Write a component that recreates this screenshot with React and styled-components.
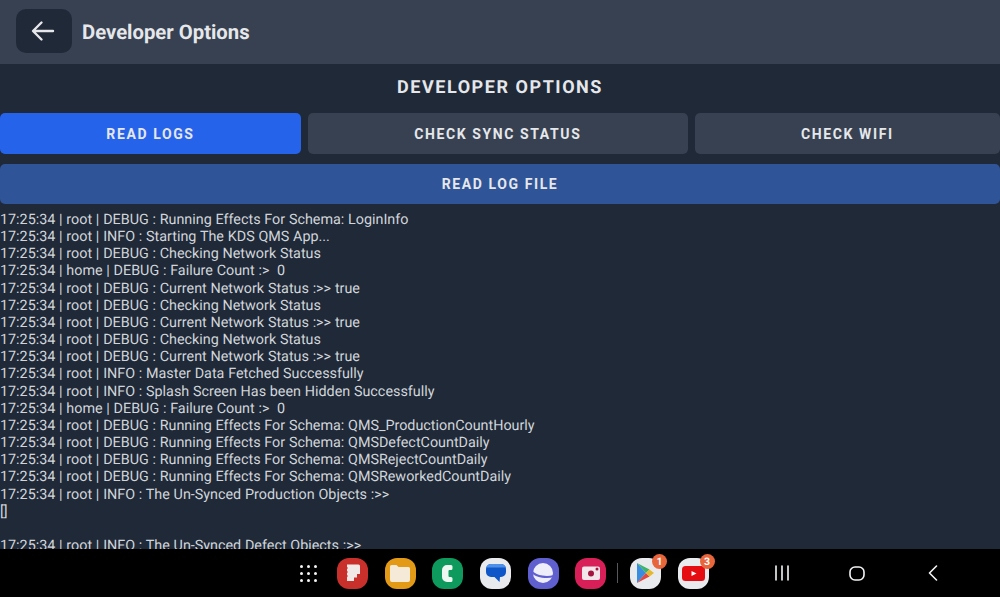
import styled, { createGlobalStyle } from 'styled-components';

const GlobalStyle = createGlobalStyle`
  html, body {
    margin: 0;
    padding: 0;
    background: #000;
    font-family: Roboto, "Liberation Sans", sans-serif;
    text-rendering: geometricPrecision;
  }
`;

const Page = styled.div`
  width: 1000px;
  height: 597px;
  display: flex;
  flex-direction: column;
  overflow: hidden;
  background: #1f2937;
`;

const Header = styled.header`
  height: 64px;
  flex: none;
  display: flex;
  align-items: center;
  gap: 10px;
  padding: 0 0 0 16px;
  box-sizing: border-box;
  background: #374151;
`;

const BackButton = styled.button`
  width: 56px;
  height: 44px;
  margin-top: -2px;
  border: none;
  border-radius: 10px;
  background: #1f2937;
  display: flex;
  align-items: center;
  justify-content: center;
  padding: 0 2px 0 0;
`;

const HeaderTitle = styled.h1`
  margin: 0;
  font-size: 20.3px;
  font-weight: 700;
  color: #e5e7eb;
`;

const Content = styled.main`
  flex: 1;
  min-height: 0;
  overflow: hidden;
`;

const PageTitle = styled.h2`
  margin: 0;
  height: 49px;
  line-height: 47px;
  text-align: center;
  font-size: 18px;
  font-weight: 700;
  letter-spacing: 1.55px;
  color: #e5e7eb;
`;

const TabRow = styled.div`
  display: flex;
  gap: 7px;
  margin-bottom: 10px;
`;

const Tab = styled.button`
  flex: 1 1 auto;
  height: 41px;
  padding: 0;
  border: none;
  border-radius: 5px;
  background: ${(props) => (props.$active ? '#2563eb' : '#374151')};
  color: #e5e7eb;
  font-family: inherit;
  font-size: 14px;
  font-weight: 700;
  letter-spacing: 1.6px;
`;

const FileButton = styled(Tab)`
  display: block;
  width: 100%;
  height: 40px;
  background: #2f5497;
`;

const LogArea = styled.div`
  padding-top: 7px;
  font-size: 14.35px;
  word-spacing: 0.2px;
  line-height: 17.15px;
  color: #d1d5db;
  white-space: pre;
`;

const LogLine = styled.div`
  min-height: 17.15px;
`;

const NavBar = styled.nav`
  height: 48px;
  flex: none;
  background: #000;
  display: flex;
  align-items: center;
  padding-left: 300px;
`;

const Grid = styled.div`
  width: 17px;
  height: 17px;
  display: grid;
  grid-template-columns: repeat(3, 3px);
  grid-auto-rows: 3px;
  justify-content: space-between;
  align-content: space-between;
  margin-right: 20px;
  span {
    background: #f3f4f6;
    border-radius: 50%;
  }
`;

const AppIcon = styled.div`
  position: relative;
  width: 31px;
  height: 31px;
  border-radius: 12px;
  background: ${(props) => props.$bg};
  margin-right: ${(props) => props.$gap ?? 16.7}px;
  flex: none;
  display: flex;
  align-items: center;
  justify-content: center;
`;

const Badge = styled.span`
  position: absolute;
  top: -4px;
  right: -6px;
  width: 15px;
  height: 15px;
  border-radius: 50%;
  background: #e8663c;
  color: #fff;
  font-size: 10.5px;
  font-weight: 700;
  line-height: 15px;
  text-align: center;
`;

const Divider = styled.div`
  width: 1px;
  height: 20px;
  background: #55595e;
  margin-right: 11.5px;
`;

const SystemKeys = styled.div`
  display: flex;
  align-items: center;
  margin-left: 65px;
`;

const KeyMiddle = styled.svg`
  margin: 0 63px 0 59px;
`;

const logs = [
  '17:25:34 | root | DEBUG : Running Effects For Schema: LoginInfo',
  '17:25:34 | root | INFO : Starting The KDS QMS App...',
  '17:25:34 | root | DEBUG : Checking Network Status',
  '17:25:34 | home | DEBUG : Failure Count :>  0',
  '17:25:34 | root | DEBUG : Current Network Status :>> true',
  '17:25:34 | root | DEBUG : Checking Network Status',
  '17:25:34 | root | DEBUG : Current Network Status :>> true',
  '17:25:34 | root | DEBUG : Checking Network Status',
  '17:25:34 | root | DEBUG : Current Network Status :>> true',
  '17:25:34 | root | INFO : Master Data Fetched Successfully',
  '17:25:34 | root | INFO : Splash Screen Has been Hidden Successfully',
  '17:25:34 | home | DEBUG : Failure Count :>  0',
  '17:25:34 | root | DEBUG : Running Effects For Schema: QMS_ProductionCountHourly',
  '17:25:34 | root | DEBUG : Running Effects For Schema: QMSDefectCountDaily',
  '17:25:34 | root | DEBUG : Running Effects For Schema: QMSRejectCountDaily',
  '17:25:34 | root | DEBUG : Running Effects For Schema: QMSReworkedCountDaily',
  '17:25:34 | root | INFO : The Un-Synced Production Objects :>>',
  '[]',
  '',
  '17:25:34 | root | INFO : The Un-Synced Defect Objects :>>',
];

function App() {
  return (
    <>
      <GlobalStyle />
      <Page>
        <Header>
          <BackButton aria-label="Back">
            <svg width="24" height="22" viewBox="0 0 24 22" fill="none" stroke="#e5e7eb" strokeWidth="2.4" strokeLinecap="round" strokeLinejoin="round">
              <path d="M22 11H3M10.500 2.500 2 11l8.500 8.500" />
            </svg>
          </BackButton>
          <HeaderTitle>Developer Options</HeaderTitle>
        </Header>
        <Content>
          <PageTitle>DEVELOPER OPTIONS</PageTitle>
          <TabRow>
            <Tab $active>READ LOGS</Tab>
            <Tab>CHECK SYNC STATUS</Tab>
            <Tab>CHECK WIFI</Tab>
          </TabRow>
          <FileButton>READ LOG FILE</FileButton>
          <LogArea>
            {logs.map((line, i) => (
              <LogLine key={i}>{line}</LogLine>
            ))}
          </LogArea>
        </Content>
        <NavBar>
          <Grid>
            {Array.from({ length: 9 }).map((_, i) => (
              <span key={i} />
            ))}
          </Grid>
          <AppIcon $bg="#c9302c">
            <svg width="20" height="20" viewBox="0 0 20 20">
              <path d="M4 1.500h11.500A1.500 1.500 0 0 1 17 3v8h-3v3.500h-3V18H4Z" fill="#f1e9e8" />
              <path d="M3 5h2M3 9h2M3 13h2" stroke="#c9302c" strokeWidth="1" />
            </svg>
          </AppIcon>
          <AppIcon $bg="#e39a17">
            <svg width="20" height="17" viewBox="0 0 20 17">
              <path d="M1.500 0h5l2 2h10A1.500 1.500 0 0 1 20 3.500V15a2 2 0 0 1-2 2H2a2 2 0 0 1-2-2V1.500A1.500 1.500 0 0 1 1.500 0Z" fill="#f5ead8" />
            </svg>
          </AppIcon>
          <AppIcon $bg="#0d9a5c">
            <svg width="11" height="17" viewBox="0 0 11 17">
              <path d="M5 0h4a1.500 1.500 0 0 1 1.500 1.500v2A1.500 1.500 0 0 1 9 5H7.500a1 1 0 0 0-1 1v5a1 1 0 0 0 1 1H9a1.500 1.500 0 0 1 1.500 1.500v2A1.500 1.500 0 0 1 9 17H5a5 5 0 0 1-5-5V5a5 5 0 0 1 5-5Z" fill="#eef7f2" />
            </svg>
          </AppIcon>
          <AppIcon $bg="#e8eaed">
            <svg width="20" height="18" viewBox="0 0 20 18">
              <path d="M5 0h10a5 5 0 0 1 5 5v3a5 5 0 0 1-5 5h-1l-.5 5-5-5H5a5 5 0 0 1-5-5V5a5 5 0 0 1 5-5Z" fill="#0f57c8" />
              <path d="M5 0h10a5 5 0 0 1 4.800 3.500H.2A5 5 0 0 1 5 0Z" fill="#4f8fe8" />
            </svg>
          </AppIcon>
          <AppIcon $bg="#5f5fd0">
            <svg width="26" height="24" viewBox="0 0 26 24" fill="none">
              <circle cx="13" cy="12" r="10" fill="#eeeefa" />
              <path d="M2 11c5 5 15 6 22 4" stroke="#5f5fd0" strokeWidth="2.200" strokeLinecap="round" />
            </svg>
          </AppIcon>
          <AppIcon $bg="#d81f58" $gap={11}>
            <svg width="18" height="14" viewBox="0 0 18 14">
              <rect x="0" y="0.500" width="18" height="13.500" rx="2" fill="#f3e6ea" />
              <circle cx="9" cy="7.500" r="3" fill="#a3163f" />
              <circle cx="15" cy="3" r="1.500" fill="#a3163f" />
            </svg>
          </AppIcon>
          <Divider />
          <AppIcon $bg="#e8eaed">
            <svg width="18" height="20" viewBox="0 0 18 20">
              <path d="M1 0v20l9-10Z" fill="#3a8dde" />
              <path d="M1 0l9 10 3.500-3.500Z" fill="#3fb36b" />
              <path d="M1 20l9-10 3.500 3.500Z" fill="#e2483d" />
              <path d="M13.500 6.500 18 10l-4.500 3.500L10 10Z" fill="#e6b82e" />
            </svg>
            <Badge>1</Badge>
          </AppIcon>
          <AppIcon $bg="#e8eaed" $gap={0}>
            <svg width="23" height="15" viewBox="0 0 23 15">
              <rect x="0" y="0" width="23" height="15" rx="3.500" fill="#e60d12" />
              <path d="M9.500 5v5l5-2.500Z" fill="#fff" />
            </svg>
            <Badge>3</Badge>
          </AppIcon>
          <SystemKeys>
            <svg width="16" height="16" viewBox="0 0 16 16" stroke="#f3f4f6" strokeWidth="1.600" strokeLinecap="round">
              <path d="M2 1v14M8 1v14M14 1v14" />
            </svg>
            <KeyMiddle width="16" height="16" viewBox="0 0 16 16" fill="none" stroke="#f3f4f6" strokeWidth="1.600">
              <rect x="1" y="2" width="14" height="13" rx="5" />
            </KeyMiddle>
            <svg width="10" height="16" viewBox="0 0 10 16" fill="none" stroke="#f3f4f6" strokeWidth="1.600" strokeLinecap="round" strokeLinejoin="round">
              <path d="M8.500 1 1.500 8l7 7" />
            </svg>
          </SystemKeys>
        </NavBar>
      </Page>
    </>
  );
}

export default App;
